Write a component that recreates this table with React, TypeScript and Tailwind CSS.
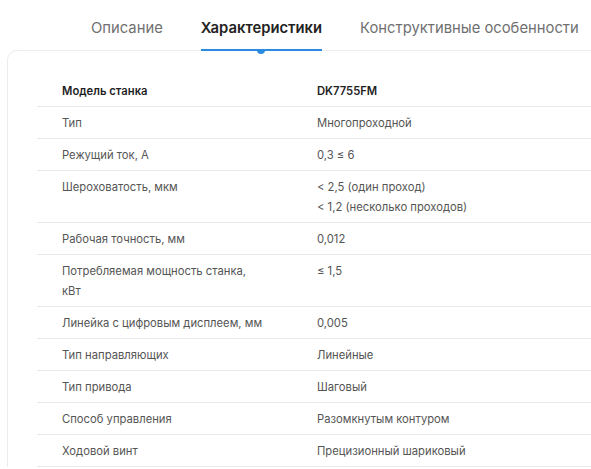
import React from 'react';

const rows: [string, string[]][] = [
  ['Тип', ['Многопроходной']],
  ['Режущий ток, А', ['0,3 ≤ 6']],
  ['Шероховатость, мкм', ['< 2,5 (один проход)', '< 1,2 (несколько проходов)']],
  ['Рабочая точность, мм', ['0,012']],
  ['Потребляемая мощность станка, кВт', ['≤ 1,5']],
  ['Линейка с цифровым дисплеем, мм', ['0,005']],
  ['Тип направляющих', ['Линейные']],
  ['Тип привода', ['Шаговый']],
  ['Способ управления', ['Разомкнутым контуром']],
  ['Ходовой винт', ['Прецизионный шариковый']],
];

const tabs = ['Описание', 'Характеристики', 'Конструктивные особенности'];

export default function App() {
  return (
    <div className="w-[591px] h-[469px] overflow-hidden bg-white font-['Inter',sans-serif]">
      <nav className="flex gap-[38px] pl-[91px] pt-[15px] h-[50px]">
        {tabs.map((t, i) => (
          <div key={t} className="relative">
            <span
              className={
                i === 1
                  ? 'text-[14.8px] font-semibold text-[#222]'
                  : 'text-[14.8px] text-[#707070]'
              }
            >
              {t}
            </span>
            {i === 1 && (
              <div className="absolute left-0 right-0 top-[34px] z-10">
                <div className="h-[2px] bg-[#2a8be0]" />
                <div className="mx-auto -mt-[1px] h-[4px] w-[8px] rounded-b-full bg-[#2a8be0]" />
              </div>
            )}
          </div>
        ))}
      </nav>
      <div className="ml-[7px] w-[640px] rounded-tl-[10px] border-l border-t border-[#ececec] pl-[29px] pt-[24px]">
        <table className="w-full border-collapse text-[11.25px] leading-[20px]">
          <tbody>
            <tr className="border-b border-[#e8e8e8]">
              <td className="w-[255px] pl-[25px] pt-[6px] pb-[5px] font-semibold text-[#1f1f1f]">Модель станка</td>
              <td className="pl-[25px] pt-[6px] pb-[5px] font-semibold text-[#1f1f1f]">DK7755FM</td>
            </tr>
            {rows.map(([k, v]) => (
              <tr key={k} className="border-b border-[#e8e8e8] align-top">
                <td className="w-[255px] pl-[25px] pt-[6px] pb-[5px] text-[#555]">
                  <div className="w-[204px]">{k}</div>
                </td>
                <td className="pl-[25px] pt-[6px] pb-[5px] text-[#555]">
                  {v.map((l) => (
                    <div key={l}>{l}</div>
                  ))}
                </td>
              </tr>
            ))}
          </tbody>
        </table>
      </div>
    </div>
  );
}
